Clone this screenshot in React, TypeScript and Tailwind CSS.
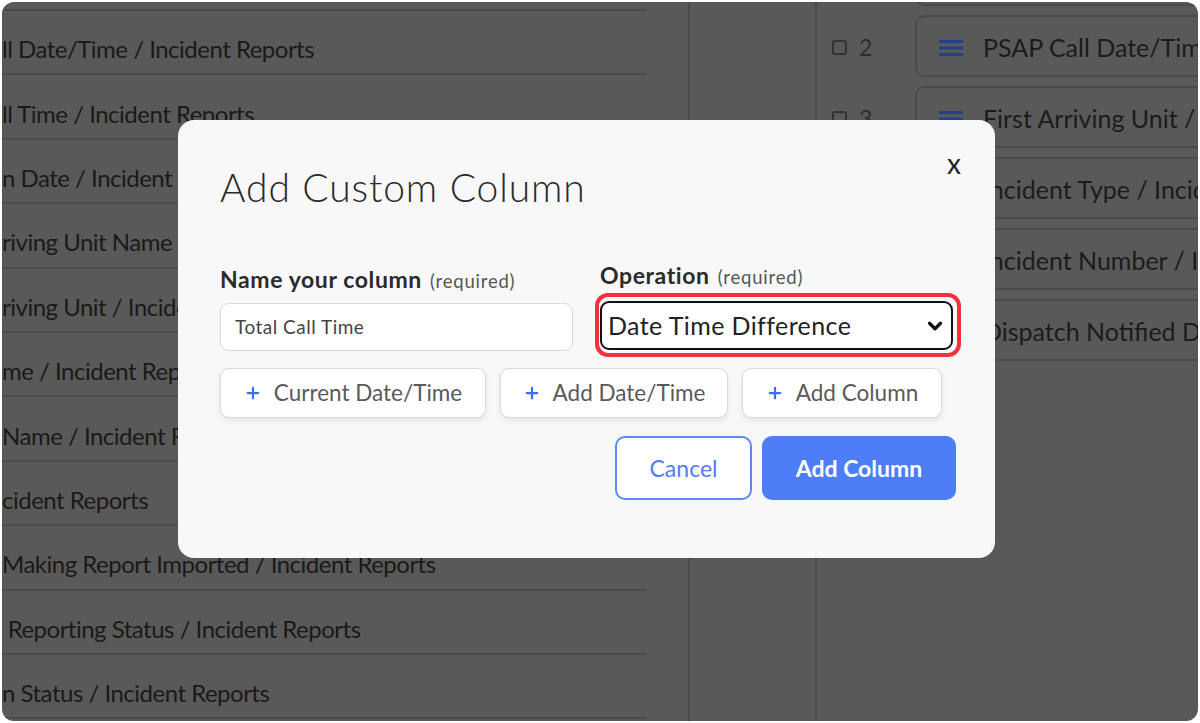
import { ChevronDown, Plus } from "lucide-react";

const leftRows = [
  "ll Date/Time / Incident Reports",
  "ll Time / Incident Reports",
  "n Date / Incident Reports",
  "riving Unit Name / Incident Reports",
  "riving Unit / Incident Reports",
  "me / Incident Reports",
  "Name / Incident Reports",
  "cident Reports",
  "Making Report Imported / Incident Reports",
  " Reporting Status / Incident Reports",
  "n Status / Incident Reports",
];

const rightCards = [
  { n: 1, label: "Incident Date / Incident Reports" },
  { n: 2, label: "PSAP Call Date/Time / Incident Reports" },
  { n: 3, label: "First Arriving Unit / Incident Reports" },
  { n: 4, label: "Incident Type / Incident Reports" },
  { n: 5, label: "Incident Number / Incident Reports" },
  { n: 6, label: "Dispatch Notified Date/Time / Incident Reports" },
];

function HamburgerIcon() {
  return (
    <svg width="24" height="18" viewBox="0 0 24 18" className="shrink-0">
      <rect x="0" y="1" width="24" height="3" fill="#233f8a" />
      <rect x="0" y="7.5" width="24" height="3" fill="#233f8a" />
      <rect x="0" y="14" width="24" height="3" fill="#233f8a" />
    </svg>
  );
}

function ChipButton({ label, width }: { label: string; width: string }) {
  return (
    <button
      className={`${width} h-[50px] flex items-center justify-center gap-[12px] rounded-[9px] border border-[#d9d9d9] bg-white shadow-[0_3px_6px_rgba(0,0,0,0.08)] text-[22.5px] text-[#5a5a5a] whitespace-nowrap`}
    >
      <Plus size={18} strokeWidth={3} className="text-[#3d6ef5]" />
      {label}
    </button>
  );
}

export default function App() {
  return (
    <div className="w-[1200px] h-[723px] bg-white p-[2px] font-['Lato','Liberation_Sans',sans-serif]">
      <div className="relative w-full h-full rounded-[12px] overflow-hidden bg-[#595959] flex">
        {/* Background page (dimmed) */}
        <div className="w-[688px] shrink-0 border-r-2 border-[#4a4a4a] pt-[7px] pr-[42px] overflow-hidden">
          <div className="border-t-2 border-[#4c4c4c]">
            {leftRows.map((r, i) => (
              <div
                key={i}
                className="h-[64.4px] flex items-center pt-[14px] border-b-2 border-[#4c4c4c] text-[24px] text-[#1b1917] whitespace-pre tracking-[-0.5px]"
              >
                {r}
              </div>
            ))}
          </div>
        </div>
        <div className="w-[127px] shrink-0 border-r-2 border-[#4a4a4a]" />
        <div className="flex-1 overflow-hidden pl-[15px] -mt-[58px]">
          <div className="flex flex-col gap-[9px]">
            {rightCards.map((c) => (
              <div key={c.n} className="flex items-center">
                <div className="w-[83px] shrink-0 flex items-center gap-[12px] pt-[2px] text-[23px] text-[#2c2c2c]">
                  <span className="w-[15px] h-[15px] rounded-[3px] border-2 border-[#333]" />
                  {c.n}
                </div>
                <div className="h-[62px] flex-1 min-w-[400px] flex items-center gap-[20px] pl-[22px] pt-[3px] rounded-[10px] border-2 border-[#4a4a4a] text-[25px] text-[#1d1b1a] whitespace-nowrap">
                  <HamburgerIcon />
                  {c.label}
                </div>
              </div>
            ))}
          </div>
        </div>

        {/* Modal */}
        <div className="absolute left-[176px] top-[118px] w-[817px] h-[438px] rounded-[16px] bg-[#f8f8f8] pl-[42px] pr-[39px] pt-[40px]">
          <div className="flex items-start justify-between">
            <h2 className="text-[39px] leading-[54px] font-light text-[#2a2a2a] tracking-[0.9px]">Add Custom Column</h2>
            <button className="mt-[-18px] mr-[-5px] text-[28px] text-[#222]">x</button>
          </div>

          <div className="mt-[48px] grid grid-cols-[353px_353px] gap-x-[27px]">
            <div>
              <div className="h-[36px] flex items-baseline gap-[8px]">
                <span className="text-[23px] font-bold text-[#2b2b2b] tracking-[0.6px]">Name your column</span>
                <span className="text-[18.5px] text-[#555] tracking-[0.8px]">(required)</span>
              </div>
              <div className="mt-[5px] h-[48px] rounded-[9px] border border-[#d9d9d9] bg-white flex items-center px-[14px] text-[19px] tracking-[0.5px] text-[#444]">
                Total Call Time
              </div>
            </div>
            <div>
              <div className="h-[36px] flex items-baseline gap-[8px] -mt-[4px]">
                <span className="text-[23px] font-bold text-[#2b2b2b] tracking-[0.6px]">Operation</span>
                <span className="text-[18.5px] text-[#555] tracking-[0.8px]">(required)</span>
              </div>
              <div className="relative mt-[7px]">
                <div className="h-[49px] rounded-[9px] border-2 border-[#111] bg-white flex items-center justify-between pl-[6px] pr-[5px] text-[25px] tracking-[0.4px] text-[#222]">
                  Date Time Difference
                  <ChevronDown size={22} strokeWidth={3.5} className="text-[#111]" />
                </div>
                <div className="absolute -left-[5px] -top-[8px] -right-[8px] -bottom-[7px] rounded-[13px] border-[4px] border-[#f2313f] pointer-events-none" />
              </div>
            </div>
          </div>

          <div className="mt-[17px] flex gap-[14px]">
            <ChipButton label="Current Date/Time" width="w-[266px]" />
            <ChipButton label="Add Date/Time" width="w-[228px]" />
            <ChipButton label="Add Column" width="w-[200px]" />
          </div>

          <div className="mt-[18px] flex justify-end gap-[10px]">
            <button className="w-[137px] h-[64px] rounded-[10px] border-2 border-[#5c88f8] bg-white text-[23px] text-[#4f7df5]">
              Cancel
            </button>
            <button className="w-[194px] h-[64px] rounded-[10px] bg-[#4d7ef8] text-[23px] font-bold text-white">
              Add Column
            </button>
          </div>
        </div>
      </div>
    </div>
  );
}
